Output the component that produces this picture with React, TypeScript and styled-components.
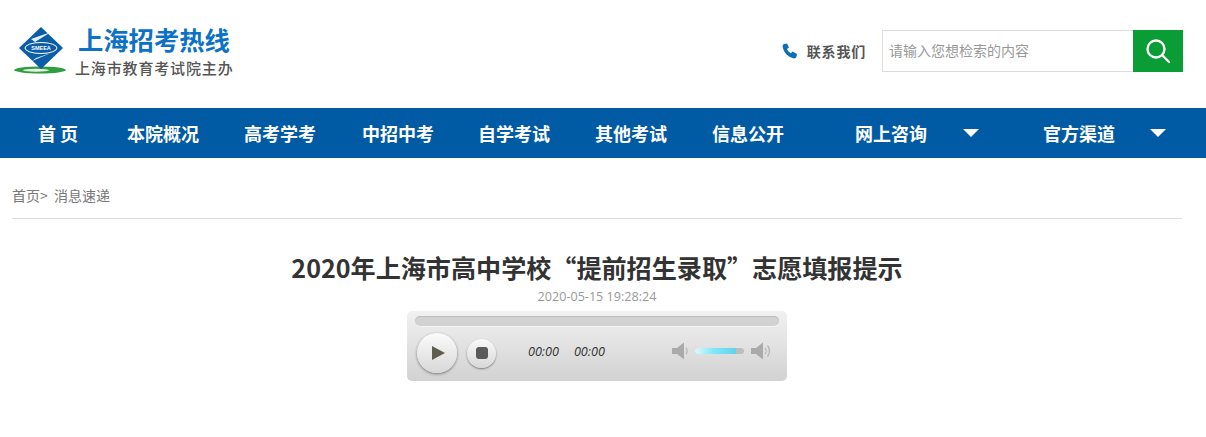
import React from "react";
import styled, { createGlobalStyle } from "styled-components";

const Global = createGlobalStyle`
  html, body { margin: 0; padding: 0; background: #fff; }
  body { font-family: "Noto Sans CJK SC", "Liberation Sans", sans-serif; }
`;

const Page = styled.div`
  width: 1206px;
  height: 437px;
  overflow: hidden;
`;

const Header = styled.header`
  height: 108px;
  display: flex;
  align-items: flex-start;
  justify-content: space-between;
  padding: 0 23px 0 13px;
  box-sizing: border-box;
`;

const Brand = styled.div`
  display: flex;
  padding-top: 24px;
`;

const LogoMark = styled.svg`
  width: 54px;
  height: 54px;
  display: block;
`;

const BrandText = styled.div`
  margin-left: 8px;
  display: flex;
  flex-direction: column;
`;

const BrandTitle = styled.div`
  font-size: 25.3px;
  line-height: 30px;
  font-weight: 700;
  color: #0b72c6;
  margin-left: 3px;
  white-space: nowrap;
`;

const BrandSub = styled.div`
  margin-top: 2px;
  font-size: 15px;
  line-height: 24px;
  font-weight: 500;
  letter-spacing: 0.85px;
  color: #555;
  white-space: nowrap;
`;

const Tools = styled.div`
  display: flex;
  align-items: center;
  padding-top: 30px;
`;

const PhoneIcon = styled.svg`
  width: 16px;
  height: 16px;
  margin-top: -1px;
  display: block;
`;

const ContactLabel = styled.span`
  margin-left: 9px;
  margin-right: 16px;
  font-size: 14px;
  line-height: 20px;
  font-weight: 700;
  letter-spacing: 0.8px;
  color: #555;
`;

const SearchBox = styled.div`
  width: 301px;
  height: 42px;
  display: flex;
  box-sizing: border-box;
`;

const SearchField = styled.div`
  flex: 1;
  border: 1px solid #ddd;
  border-right: 0;
  padding-left: 6px;
  font-size: 14px;
  line-height: 39px;
  color: #999;
`;

const SearchButton = styled.div`
  width: 50px;
  background: #0a9c35;
  display: flex;
  align-items: center;
  justify-content: center;
`;

const Nav = styled.nav`
  height: 50px;
  background: #005ba4;
  display: flex;
  align-items: center;
  padding-left: 38px;
`;

const NavItem = styled.div<{ $gap?: number }>`
  display: flex;
  align-items: center;
  margin-right: ${(p) => p.$gap ?? 45}px;
  font-size: 18px;
  line-height: 50px;
  font-weight: 700;
  color: #fff;
  white-space: pre;
`;

const Caret = styled.span<{ $left: number }>`
  width: 0;
  height: 0;
  margin-left: ${(p) => p.$left}px;
  border-left: 8px solid transparent;
  border-right: 8px solid transparent;
  border-top: 8px solid #fff;
`;

const Content = styled.main`
  padding: 0 24px 0 12px;
`;

const Breadcrumb = styled.div`
  height: 61px;
  box-sizing: border-box;
  padding-top: 26px;
  border-bottom: 1px solid #ddd;
  font-size: 14px;
  line-height: 22px;
  color: #777;
  white-space: pre;
`;

const Title = styled.h1`
  margin: 30px 0 0;
  text-align: center;
  font-size: 25.1px;
  line-height: 36px;
  font-weight: 700;
  color: #333;
`;

const DateLine = styled.div`
  margin-top: 3px;
  text-align: center;
  font-family: "Open Sans", "Liberation Sans", sans-serif;
  font-size: 12.6px;
  line-height: 18px;
  color: #999;
`;

const Player = styled.div`
  width: 380px;
  height: 70px;
  margin: 5px 0 0 395px;
  padding: 5px 8px 0;
  box-sizing: border-box;
  border-radius: 5px;
  background: linear-gradient(#f1f1f1, #d2d2d2);
`;

const Track = styled.div`
  height: 10px;
  border-radius: 5px;
  background: #d2d2d2;
  box-shadow: inset 0 1px 1px #bdbdbd, 0 1px 0 #f4f4f4;
`;

const Controls = styled.div`
  display: flex;
  align-items: center;
  margin-top: 7px;
  padding-left: 2px;
`;

const PlayButton = styled.div`
  width: 40px;
  height: 40px;
  border-radius: 50%;
  background: linear-gradient(#fbfbfb, #d8d8d8);
  box-shadow: 0 1px 3px rgba(0, 0, 0, 0.45);
  display: flex;
  align-items: center;
  justify-content: center;
`;

const PlayGlyph = styled.span`
  width: 0;
  height: 0;
  margin-left: 2px;
  border-top: 7px solid transparent;
  border-bottom: 7px solid transparent;
  border-left: 13px solid #5f5d4e;
`;

const StopButton = styled.div`
  width: 29px;
  height: 29px;
  margin-left: 10px;
  border-radius: 50%;
  background: linear-gradient(#f9f9f9, #d8d8d8);
  box-shadow: 0 1px 2px rgba(0, 0, 0, 0.45);
  display: flex;
  align-items: center;
  justify-content: center;
`;

const StopGlyph = styled.span`
  width: 12px;
  height: 12px;
  border-radius: 3px;
  background: #5a5a5a;
`;

const Time = styled.span<{ $left: number }>`
  margin-left: ${(p) => p.$left}px;
  margin-bottom: 4px;
  font-family: "Open Sans", "Liberation Sans", sans-serif;
  font-size: 12.6px;
  font-style: italic;
  color: #333;
`;

const SpeakerIcon = styled.svg<{ $left: number }>`
  margin-left: ${(p) => p.$left}px;
  margin-bottom: 4px;
  display: block;
`;

const Volume = styled.div`
  width: 49px;
  height: 6px;
  margin-left: 7px;
  margin-bottom: 4px;
  border-radius: 3px;
  background: #bdbdbd;
  overflow: hidden;
`;

const VolumeFill = styled.div`
  width: 84%;
  height: 100%;
  background: linear-gradient(90deg, #e4f6fa, #7ee8f8 45%, #62d2ea);
`;

const Speaker = ({ left, loud }: { left: number; loud?: boolean }) => (
  <SpeakerIcon $left={left} width={loud ? 20 : 16} height="18" viewBox={loud ? "0 0 20 18" : "0 0 16 18"}>
    <path d="M0 6h5l7-5.500v17L5 12H0z" fill="#aaa" />
    <path d="M14 6c1.400 1.600 1.400 4.400 0 6" fill="none" stroke="#b5b5b5" strokeWidth="1.300" />
    {loud && <path d="M16.500 3.500c2.600 3 2.600 8 0 11" fill="none" stroke="#b5b5b5" strokeWidth="1.300" />}
  </SpeakerIcon>
);

export default function App() {
  return (
    <Page>
      <Global />
      <Header>
        <Brand>
          <LogoMark viewBox="0 0 54 54">
            <ellipse cx="27" cy="46" rx="26" ry="3.500" fill="#2f9e3f" />
            <ellipse cx="23" cy="46.300" rx="13" ry="1.500" fill="#e8f5e8" />
            <path d="M28 3 50 24 28 45 6 24z" fill="#0c5da8" />
            <ellipse cx="28" cy="24" rx="16" ry="5.500" fill="none" stroke="#fff" strokeWidth="1" />
            <path d="M18 15 38 8 22 18zM19 37 38 29 23 34z" fill="#e6eef7" />
            <text x="28" y="26" textAnchor="middle" fontSize="5.500" fontWeight="700" fill="#fff" fontFamily="Liberation Sans, sans-serif">SMEEA</text>
          </LogoMark>
          <BrandText>
            <BrandTitle>上海招考热线</BrandTitle>
            <BrandSub>上海市教育考试院主办</BrandSub>
          </BrandText>
        </Brand>
        <Tools>
          <PhoneIcon viewBox="0 0 16 16">
            <path d="M2 1 5 .5l2 4-2 1.600c.7 1.800 2 3.200 3.800 4.200L10.600 8.500l4.400 2.500-.6 3c-.4 1-1.400 1.500-2.500 1.400C6.500 14.800 1.500 9.500.6 3.600.5 2.400 1 1.500 2 1z" fill="#0b6fb8" />
          </PhoneIcon>
          <ContactLabel>联系我们</ContactLabel>
          <SearchBox>
            <SearchField>请输入您想检索的内容</SearchField>
            <SearchButton>
              <svg width="26" height="26" viewBox="0 0 26 26" fill="none" stroke="#fff" strokeWidth="2.400">
                <circle cx="11" cy="11" r="8.500" />
                <path d="M17 17l7 7" strokeLinecap="round" />
              </svg>
            </SearchButton>
          </SearchBox>
        </Tools>
      </Header>
      <Nav>
        <NavItem $gap={49}>首 页</NavItem>
        <NavItem>本院概况</NavItem>
        <NavItem $gap={46}>高考学考</NavItem>
        <NavItem $gap={44}>中招中考</NavItem>
        <NavItem>自学考试</NavItem>
        <NavItem>其他考试</NavItem>
        <NavItem $gap={71}>信息公开</NavItem>
        <NavItem $gap={64}>网上咨询<Caret $left={36} /></NavItem>
        <NavItem $gap={0}>官方渠道<Caret $left={35} /></NavItem>
      </Nav>
      <Content>
        <Breadcrumb>首页{">"}  消息速递</Breadcrumb>
        <Title>2020年上海市高中学校“提前招生录取”志愿填报提示</Title>
        <DateLine>2020-05-15 19:28:24</DateLine>
        <Player>
          <Track />
          <Controls>
            <PlayButton><PlayGlyph /></PlayButton>
            <StopButton><StopGlyph /></StopButton>
            <Time $left={32}>00:00</Time>
            <Time $left={15}>00:00</Time>
            <Speaker left={67} />
            <Volume><VolumeFill /></Volume>
            <Speaker left={7} loud />
          </Controls>
        </Player>
      </Content>
    </Page>
  );
}
